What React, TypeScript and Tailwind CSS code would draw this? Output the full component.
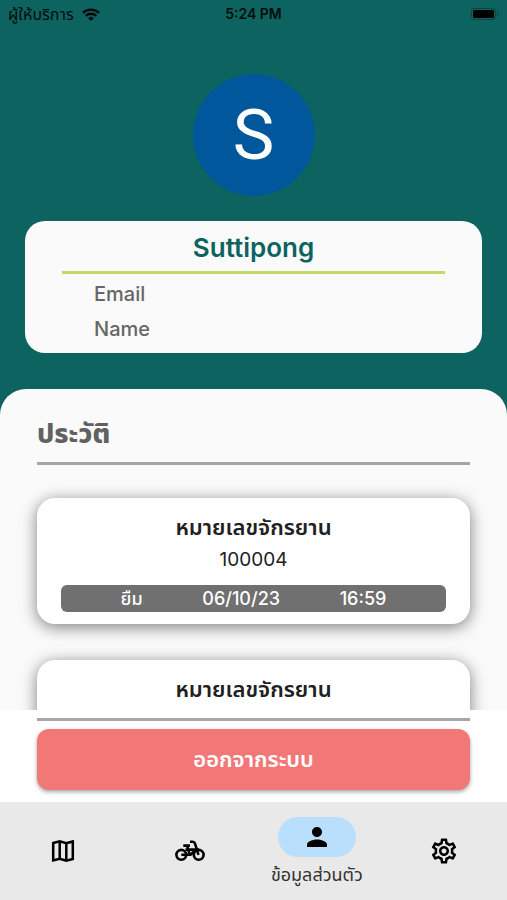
import type { ReactNode } from "react";
import { MdPerson, MdOutlineSettings } from "react-icons/md";

type Ride = { id: string; details?: { bike: string; action: string; date: string; time: string } };

const rides: Ride[] = [
  { id: "a", details: { bike: "100004", action: "ยืม", date: "06/10/23", time: "16:59" } },
  { id: "b" },
];

function WifiIcon() {
  return (
    <svg viewBox="0 0 18 13" className="h-[13px] w-[18px]" fill="none" stroke="currentColor" strokeWidth="2.4" aria-hidden="true">
      <path d="M0.9 4.9a11.6 11.6 0 0 1 16.2 0" />
      <path d="M3.8 7.9a7.4 7.4 0 0 1 10.4 0" />
      <path d="M9 13 6.2 10.2a4 4 0 0 1 5.6 0Z" fill="currentColor" stroke="none" />
    </svg>
  );
}

function BatteryIcon() {
  return (
    <svg viewBox="0 0 28 12" className="h-3 w-7" aria-hidden="true">
      <rect x="0.5" y="0.5" width="24" height="11" rx="3" fill="none" stroke="#000" strokeOpacity="0.3" />
      <rect x="2" y="2" width="21" height="8" rx="1.5" fill="#000" />
      <path d="M26 4v4c1-.4 1.5-1.2 1.5-2S27 4.4 26 4Z" fill="#000" fillOpacity="0.3" />
    </svg>
  );
}

function MapIcon() {
  return (
    <svg viewBox="0 0 24 24" className="size-6" fill="none" stroke="currentColor" strokeWidth="2.5" aria-hidden="true">
      <path d="M2.2 4 8.7 2.3 15.3 4.3 21.8 2.5V20l-6.5 1.8-6.6-2L2.2 21.5Z" />
      <path d="M8.7 2.3v17.5M15.3 4.3v17.5" />
    </svg>
  );
}

function BikeIcon() {
  return (
    <svg viewBox="0 0 30 22" className="h-[22px] w-[30px]" fill="none" stroke="currentColor" strokeWidth="2.6" aria-hidden="true">
      <circle cx="6.3" cy="14.8" r="4.9" />
      <circle cx="23.7" cy="14.8" r="4.9" />
      <path d="M6.3 14.8H15.5L21 9.6H10.5" />
      <path d="M8.3 5.6h6.7M12 5.600l2.8 9" />
      <path d="M15 1.8h2.6c1.3 0 2 .6 2.4 1.8l3.5 11.2" />
    </svg>
  );
}

function StatusBar() {
  return (
    <div className="grid h-7 grid-cols-3 items-center px-2 text-sm text-black/90">
      <div className="flex items-center gap-2">
        <span className="text-base whitespace-nowrap">ผู้ให้บริการ</span>
        <WifiIcon />
      </div>
      <span className="text-center font-semibold">5:24 PM</span>
      <div className="flex justify-end">
        <BatteryIcon />
      </div>
    </div>
  );
}

function RideCard({ details }: { details: Ride["details"] }) {
  return (
    <li className="min-h-[126px] shrink-0 rounded-[18px] bg-white px-6 py-3 text-center text-[#212121] shadow-[0_3px_16px_rgba(0,0,0,0.5)]">
      <h3 className="text-[22px] leading-[34px] font-semibold">หมายเลขจักรยาน</h3>
      {details && (
        <>
          <p className="text-[19px] leading-8">{details.bike}</p>
          <div className="mt-[9px] flex h-[27px] items-center justify-evenly rounded-md bg-[#707070] text-[18px] font-medium text-white">
            <span>{details.action}</span>
            <span>{details.date}</span>
            <span>{details.time}</span>
          </div>
        </>
      )}
    </li>
  );
}

function NavItem({ label, active, children }: { label: string; active?: boolean; children: ReactNode }) {
  return (
    <button type="button" aria-label={label} aria-current={active ? "page" : undefined} className="flex flex-1 flex-col items-center justify-center text-black">
      <span className={active ? "mt-1 flex h-10 w-[78px] items-center justify-center rounded-full bg-[#b9dffd]" : "flex"}>{children}</span>
      {active && <span className="mt-1 text-[18px] leading-7 whitespace-nowrap text-[#333]">{label}</span>}
    </button>
  );
}

export default function App() {
  return (
    <div className="flex h-screen flex-col bg-[#0d635f] font-['Inter','Noto_Sans_Thai',sans-serif]">
      <StatusBar />
      <header className="px-[25px] pt-[46px] pb-9">
        <div className="mx-auto flex size-[122px] items-center justify-center rounded-full bg-[#01579b] font-[Roboto,sans-serif] text-[70px] leading-none text-white">
          S
        </div>
        <section className="mt-[25px] h-[132px] rounded-[20px] bg-[#fafafa] px-[37px] pt-2">
          <h1 className="border-b-[3px] border-[#c2d968] pb-1 text-center text-[26px] leading-[38px] font-semibold text-[#0d635f]">Suttipong</h1>
          <div className="px-8 pt-[3px] text-xl leading-[35px] font-medium text-[#666]">
            <p>Email</p>
            <p>Name</p>
          </div>
        </section>
      </header>
      <main className="flex min-h-0 flex-1 flex-col rounded-t-[26px] bg-[#fafafa]">
        <div className="px-[37px] pt-6">
          <h2 className="border-b-[3px] border-[#a6a6a6] pb-[7px] text-[27px] leading-[42px] font-extrabold text-[#616161]">ประวัติ</h2>
        </div>
        <ul className="flex min-h-0 flex-1 [scrollbar-width:none] flex-col gap-9 overflow-y-auto px-[37px] pt-[33px]">
          {rides.map((ride) => (
            <RideCard key={ride.id} details={ride.details} />
          ))}
        </ul>
      </main>
      <div className="bg-white px-[37px] pt-2 pb-3">
        <hr className="mb-2 border-t-[3px] border-[#a6a6a6]" />
        <button type="button" className="h-[61px] w-full rounded-xl bg-[#f27777] text-[22px] font-semibold text-white shadow-[0_2px_4px_rgba(0,0,0,0.35)]">
          ออกจากระบบ
        </button>
      </div>
      <nav className="flex h-[98px] bg-[#e9e9e9]">
        <NavItem label="แผนที่">
          <MapIcon />
        </NavItem>
        <NavItem label="จักรยาน">
          <BikeIcon />
        </NavItem>
        <NavItem label="ข้อมูลส่วนตัว" active>
          <MdPerson size={30} />
        </NavItem>
        <NavItem label="ตั้งค่า">
          <MdOutlineSettings size={30} />
        </NavItem>
      </nav>
    </div>
  );
}
